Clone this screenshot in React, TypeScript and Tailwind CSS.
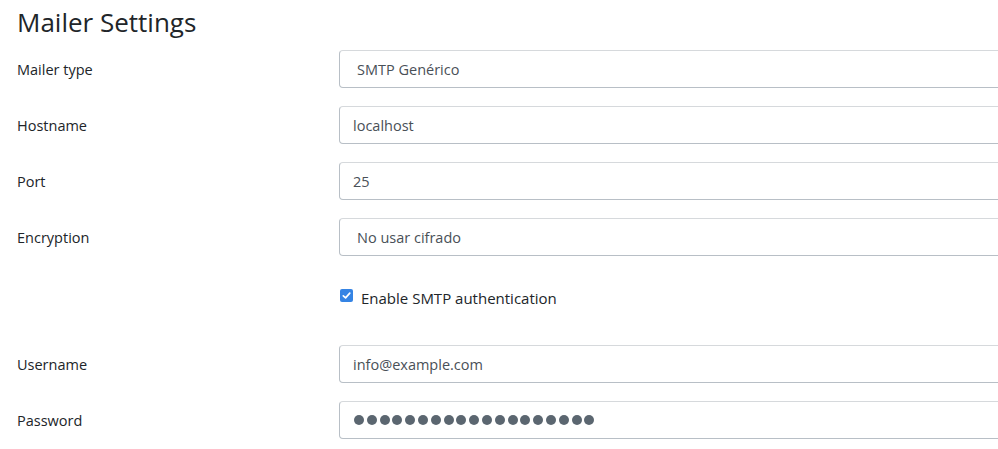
import React from "react";

const font = { fontFamily: '"Open Sans", "Noto Sans", sans-serif' };

function Row({ label, children }: { label: string; children: React.ReactNode }) {
  return (
    <div className="flex items-center h-[38px]">
      <label className="w-[322px] shrink-0 pt-[2px] text-[14.5px] text-[#212529]">{label}</label>
      {children}
    </div>
  );
}

function Field({ value, select }: { value: string; select?: boolean }) {
  return (
    <div
      className={`w-[700px] shrink-0 h-[38px] flex items-center pt-[2px] rounded-[4px] border border-[#b8bfc6] border-t-[#d6d9dc] bg-white text-[14.5px] text-[#495057] ${
        select ? "pl-[17px]" : "pl-[13px]"
      }`}
    >
      {value}
    </div>
  );
}

function PasswordField({ count }: { count: number }) {
  return (
    <div className="w-[700px] shrink-0 h-[38px] flex items-center gap-[2.8px] rounded-[4px] border border-[#b8bfc6] border-t-[#d6d9dc] bg-white pl-[14px]">
      {Array.from({ length: count }).map((_, i) => (
        <span key={i} className="block w-[10px] h-[10px] rounded-full bg-[#5b6670]" />
      ))}
    </div>
  );
}

export default function App() {
  return (
    <div className="w-[998px] h-[449px] overflow-hidden bg-white pl-[17px]" style={font}>
      <h2 className="text-[26px] leading-[32px] pt-[6px] text-[#212529] font-normal">Mailer Settings</h2>
      <div className="flex flex-col gap-[18px] mt-[12px]">
        <Row label="Mailer type">
          <Field value="SMTP Genérico" select />
        </Row>
        <Row label="Hostname">
          <Field value="localhost" />
        </Row>
        <Row label="Port">
          <Field value="25" />
        </Row>
        <Row label="Encryption">
          <Field value="No usar cifrado" select />
        </Row>
      </div>
      <div className="flex items-start h-[89px] pt-[33px] pl-[323px]">
        <span className="w-[13px] h-[13px] rounded-[2px] bg-[#3584e4] flex items-center justify-center">
          <svg width="11" height="11" viewBox="0 0 12 12" fill="none">
            <path d="M2.5 6.3 L5 8.6 L9.6 3.4" stroke="white" strokeWidth="1.8" strokeLinecap="round" strokeLinejoin="round" />
          </svg>
        </span>
        <span className="ml-[8px] text-[15px] leading-[18px] text-[#212529]">Enable SMTP authentication</span>
      </div>
      <div className="flex flex-col gap-[18px]">
        <Row label="Username">
          <Field value="info@example.com" />
        </Row>
        <Row label="Password">
          <PasswordField count={19} />
        </Row>
      </div>
    </div>
  );
}
